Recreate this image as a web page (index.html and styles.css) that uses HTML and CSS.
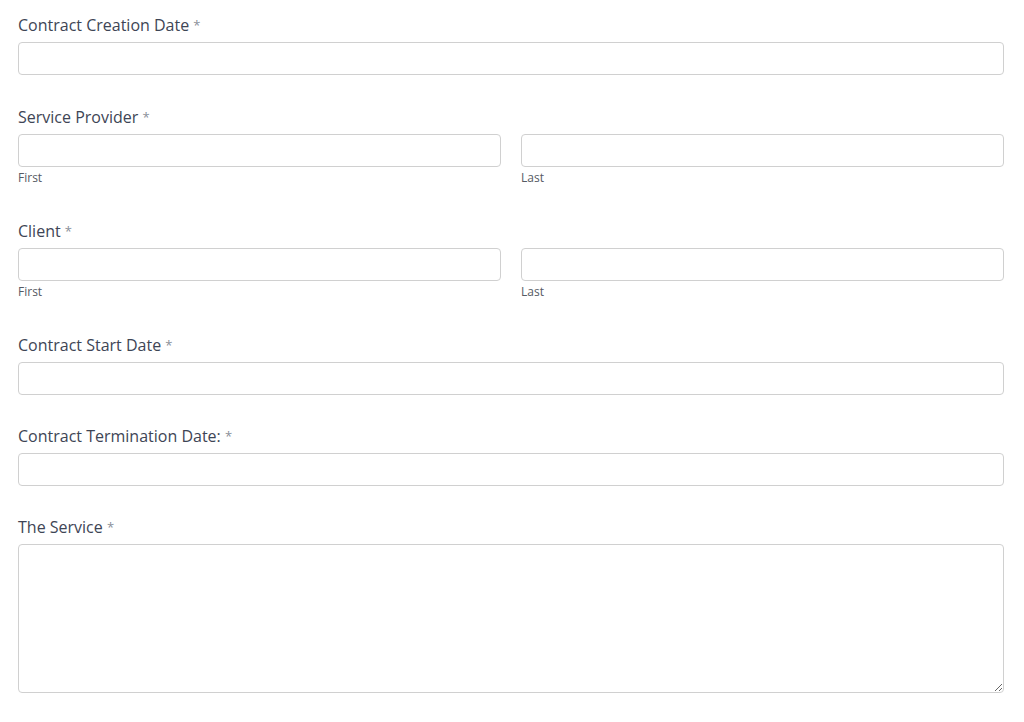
FILE: index.html
```html
<!DOCTYPE html>
<html lang="en">
<head>
    <meta charset="UTF-8">
    <meta name="viewport" content="width=device-width, initial-scale=1.0">
    <title>Contract Form</title>
    <link rel="stylesheet" href="styles.css">
</head>
<body>
    <form class="contract-form">
        <div class="field">
            <label class="field-label">Contract Creation Date <span class="req">*</span></label>
            <input type="text" class="text-input">
        </div>

        <div class="field">
            <label class="field-label">Service Provider <span class="req">*</span></label>
            <div class="name-row">
                <div class="name-part">
                    <input type="text" class="text-input">
                    <span class="sub-label">First</span>
                </div>
                <div class="name-part">
                    <input type="text" class="text-input">
                    <span class="sub-label">Last</span>
                </div>
            </div>
        </div>

        <div class="field">
            <label class="field-label">Client <span class="req">*</span></label>
            <div class="name-row">
                <div class="name-part">
                    <input type="text" class="text-input">
                    <span class="sub-label">First</span>
                </div>
                <div class="name-part">
                    <input type="text" class="text-input">
                    <span class="sub-label">Last</span>
                </div>
            </div>
        </div>

        <div class="field">
            <label class="field-label">Contract Start Date <span class="req">*</span></label>
            <input type="text" class="text-input">
        </div>

        <div class="field">
            <label class="field-label">Contract Termination Date: <span class="req">*</span></label>
            <input type="text" class="text-input">
        </div>

        <div class="field">
            <label class="field-label">The Service <span class="req">*</span></label>
            <textarea class="text-area"></textarea>
        </div>
    </form>
</body>
</html>
```

FILE: styles.css
```css
* {
    margin: 0;
    padding: 0;
    box-sizing: border-box;
    font-family: 'Open Sans', 'Liberation Sans', sans-serif;
}

body {
    background-color: #fff;
    color: #3e4555;
}

.contract-form {
    padding: 16px 20px 0 18px;
    display: flex;
    flex-direction: column;
    gap: 32px;
}

.field {
    display: flex;
    flex-direction: column;
}

.field:first-child {
    margin-bottom: 1px;
}

.field-label {
    font-size: 16px;
    line-height: 18px;
    margin-bottom: 8px;
    color: #3e4555;
}

.req {
    color: #8a8f99;
    font-size: 13px;
    vertical-align: 1px;
}

.text-input {
    width: 100%;
    height: 33px;
    border: 1px solid #d0d0d0;
    border-radius: 4px;
    background: #fff;
    outline: none;
}

.name-row {
    display: flex;
    gap: 20px;
}

.name-part {
    flex: 1;
    display: flex;
    flex-direction: column;
}

.sub-label {
    font-size: 12px;
    line-height: 16px;
    margin: 3px 0 4px;
    color: #555a63;
}

.text-area {
    width: 100%;
    height: 149px;
    border: 1px solid #d0d0d0;
    border-radius: 4px;
    background: #fff;
    resize: vertical;
    outline: none;
}
```
